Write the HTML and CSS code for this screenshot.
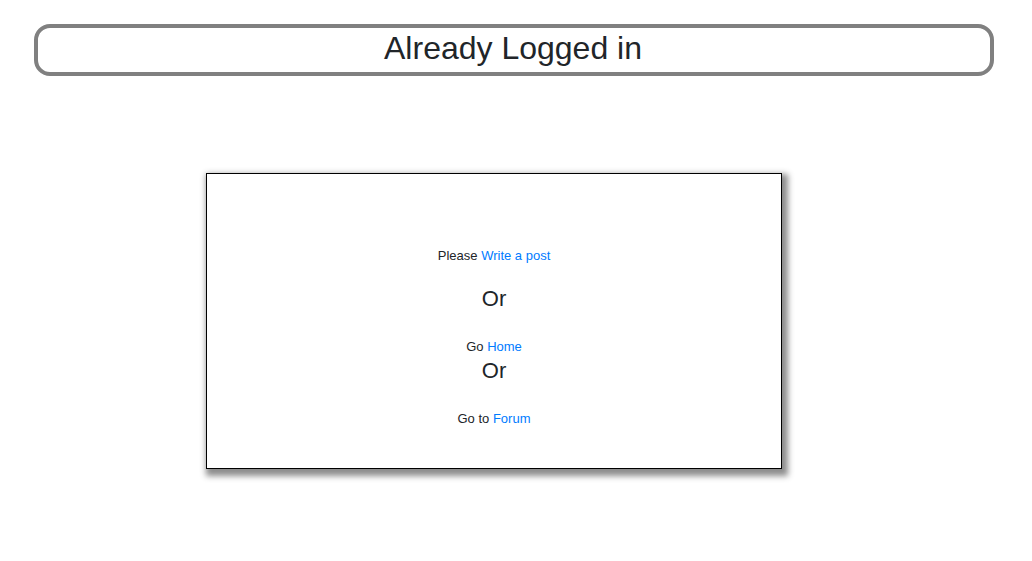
FILE: index.html
```html
<!DOCTYPE html>
<html>
<head>
<meta charset="utf-8">
<link rel="stylesheet" href="styles.css">
</head>
<body>
<div class="page">
  <header class="title-box">
    <h1 class="title">Already Logged in</h1>
  </header>
  <main class="card">
    <p class="line first">Please <a href="#">Write a post</a></p>
    <p class="or or-1">Or</p>
    <p class="line">Go <a href="#">Home</a></p>
    <p class="or or-2">Or</p>
    <p class="line">Go to <a href="#">Forum</a></p>
  </main>
</div>
</body>
</html>
```

FILE: styles.css
```css
html, body {
  margin: 0;
  padding: 0;
  background: #fff;
}
body {
  font-family: "Liberation Sans", Arial, sans-serif;
  color: #212529;
  min-height: 561px;
}
.page {
  display: flex;
  flex-direction: column;
  padding: 24px 38px 60px 34px;
}
.title-box {
  border: 4px solid #808080;
  border-radius: 16px;
  height: 44px;
  box-sizing: content-box;
  display: flex;
  align-items: center;
  justify-content: center;
}
.title {
  margin: 0 2px 4px 0;
  font-size: 32px;
  font-weight: 400;
  line-height: 38px;
}
.card {
  align-self: flex-start;
  margin: 97px 0 0 172px;
  width: 574px;
  border: 1px solid #000;
  box-shadow: 3px 4px 6px 3px rgba(0, 0, 0, 0.45);
  padding: 74px 0 42px;
  display: flex;
  flex-direction: column;
  align-items: center;
  text-align: center;
}
.card .line,
.card .or {
  margin: 0;
}
.line {
  font-size: 13px;
  line-height: 15px;
}
.or {
  font-size: 22px;
  line-height: 25px;
}
.card .or-1 {
  margin-top: 23px;
  margin-bottom: 28px;
}
.card .or-2 {
  margin-top: 4px;
  margin-bottom: 28px;
}
a {
  color: #007bff;
  text-decoration: none;
}
```
